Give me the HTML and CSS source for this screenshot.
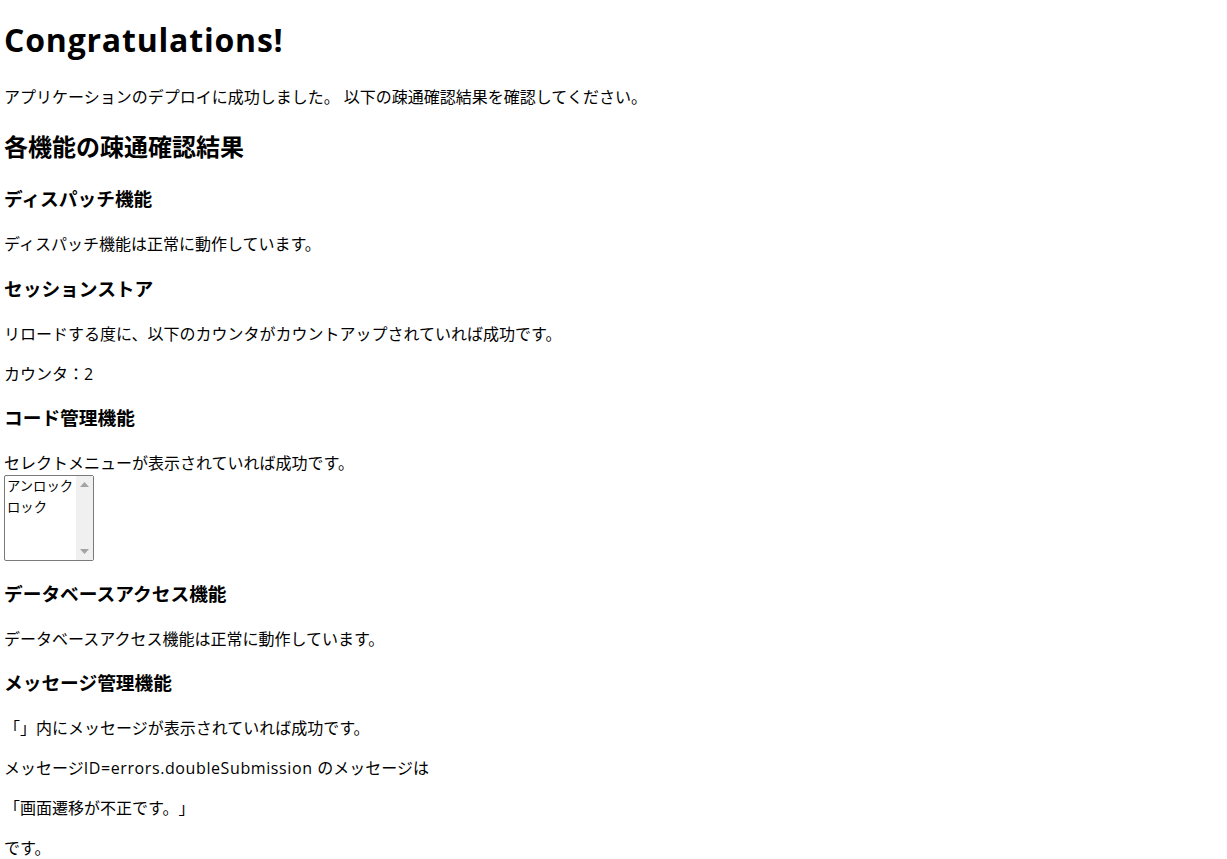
FILE: index.html
```html
<!DOCTYPE html>
<html lang="ja">
<head>
<meta charset="utf-8">
<title>Congratulations!</title>
<link rel="stylesheet" href="styles.css">
</head>
<body>
<h1 class="title">Congratulations!</h1>
<p>アプリケーションのデプロイに成功しました。 以下の疎通確認結果を確認してください。</p>

<h2>各機能の疎通確認結果</h2>

<h3>ディスパッチ機能</h3>
<p>ディスパッチ機能は正常に動作しています。</p>

<h3>セッションストア</h3>
<p>リロードする度に、以下のカウンタがカウントアップされていれば成功です。</p>
<p>カウンタ：<span class="latin">2</span></p>

<h3>コード管理機能</h3>
<p class="tight">セレクトメニューが表示されていれば成功です。</p>
<div class="listbox" role="listbox">
  <div class="options">
    <div class="option" role="option">アンロック</div>
    <div class="option" role="option">ロック</div>
  </div>
  <div class="scrollbar">
    <svg class="arrow" width="9" height="5" viewBox="0 0 9 5"><path d="M0 5 L4.5 0 L9 5 Z" fill="#a3a3a3"/></svg>
    <svg class="arrow" width="9" height="5" viewBox="0 0 9 5"><path d="M0 0 L4.5 5 L9 0 Z" fill="#a3a3a3"/></svg>
  </div>
</div>

<h3>データベースアクセス機能</h3>
<p>データベースアクセス機能は正常に動作しています。</p>

<h3>メッセージ管理機能</h3>
<p>「」内にメッセージが表示されていれば成功です。</p>
<p>メッセージ<span class="latin">ID=errors.doubleSubmission </span>のメッセージは</p>
<p>「画面遷移が不正です。」</p>
<p>です。</p>
</body>
</html>
```

FILE: styles.css
```css
html {
  background: #fff;
}
body {
  margin: 0 4px;
  color: #000;
  font-family: "Open Sans", "Noto Sans CJK JP", sans-serif;
  font-size: 16px;
  line-height: 1.5;
  text-spacing-trim: space-all;
}
h1, h2, h3 {
  font-weight: bold;
}
p {
  font-weight: normal;
  margin: 16px 0;
}
.latin {
  letter-spacing: 0.6px;
}
.title {
  font-size: 32px;
  letter-spacing: 0.8px;
  margin: 16px 0 21.44px;
}
h2 {
  font-size: 24px;
  margin: 19.92px 0;
}
h3 {
  font-size: 18.72px;
  margin: 18.72px 0;
}
p.tight {
  margin-bottom: 0;
}
.listbox {
  display: flex;
  width: 90px;
  height: 86px;
  box-sizing: border-box;
  border: 1px solid #7a7a7a;
  border-radius: 2px;
  background: #fff;
  margin-top: 0;
}
.options {
  flex: 1;
  padding: 0 0 0 2px;
  font-size: 13.33px;
  line-height: 21px;
}
.option {
  white-space: nowrap;
  overflow: hidden;
}
.scrollbar {
  width: 17px;
  background: #f0f0f0;
  display: flex;
  flex-direction: column;
  justify-content: space-between;
  align-items: center;
  padding: 6px 0;
}
.arrow {
  display: block;
}
```
